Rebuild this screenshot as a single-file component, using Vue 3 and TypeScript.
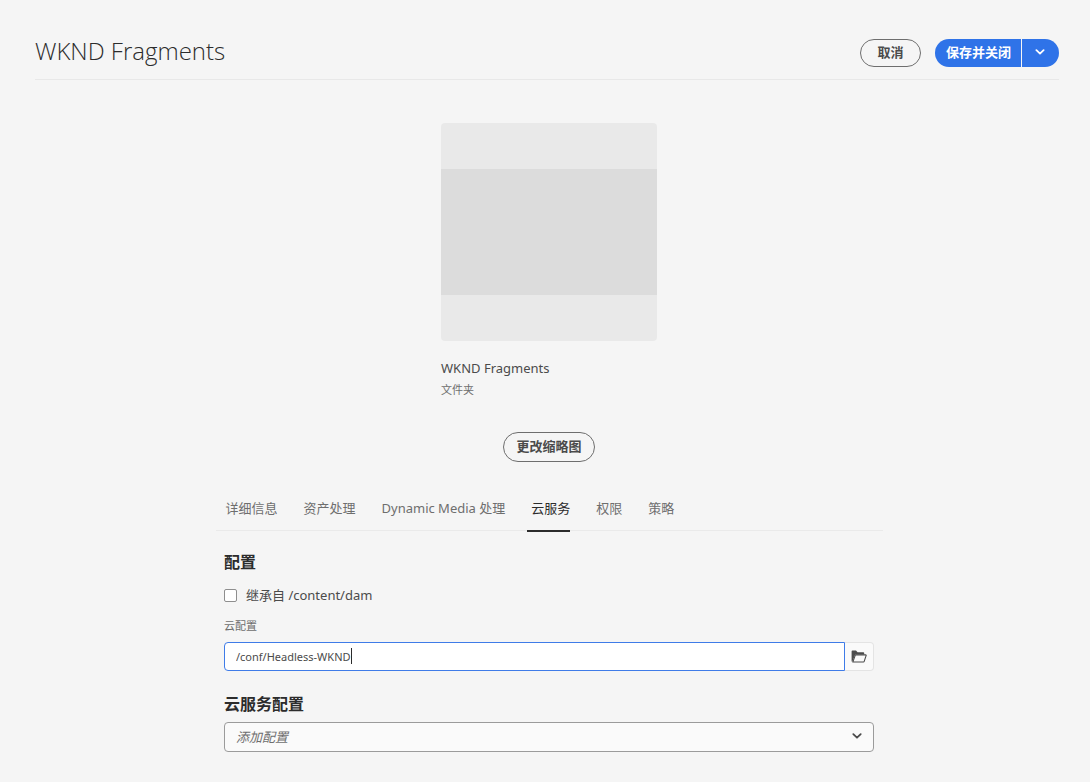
<script setup lang="ts">
import { onMounted, ref } from 'vue'

const tabs: string[] = ['详细信息', '资产处理', 'Dynamic Media 处理', '云服务', '权限', '策略']
const activeTab = ref<string>('云服务')
const inherit = ref<boolean>(false)
const cloudConfig = ref<string>('/conf/Headless-WKND')
const serviceConfig = ref<string>('')
const cloudInput = ref<HTMLInputElement | null>(null)

onMounted(() => {
  const el = cloudInput.value
  if (el) {
    el.focus()
    el.setSelectionRange(el.value.length, el.value.length)
  }
})
</script>

<template>
  <div class="page">
    <header class="header">
      <h1 class="title">WKND Fragments</h1>
      <div class="actions">
        <button type="button" class="pill cancel">取消</button>
        <div class="split">
          <button type="button" class="save">保存并关闭</button>
          <button type="button" class="more" aria-label="更多操作">
            <svg width="10" height="6" viewBox="0 0 10 6" aria-hidden="true">
              <path d="M1.4 1.2 L5 4.6 L8.6 1.2" fill="none" stroke="currentColor" stroke-width="1.8" stroke-linecap="round" stroke-linejoin="round" />
            </svg>
          </button>
        </div>
      </div>
    </header>

    <main class="main">
      <section class="card">
        <div class="thumb"><div class="thumb-band"></div></div>
        <p class="card-title">WKND Fragments</p>
        <p class="card-type">文件夹</p>
      </section>
      <button type="button" class="pill change">更改缩略图</button>

      <nav class="tabs" role="tablist">
        <button
          v-for="tab in tabs"
          :key="tab"
          type="button"
          role="tab"
          class="tab"
          :class="{ active: tab === activeTab }"
          :aria-selected="tab === activeTab"
          @click="activeTab = tab"
        >{{ tab }}</button>
      </nav>

      <form class="form" @submit.prevent>
        <h2 class="heading">配置</h2>
        <label class="check">
          <input v-model="inherit" type="checkbox" />
          <span>继承自 /content/dam</span>
        </label>
        <label class="label" for="cloud-config">云配置</label>
        <div class="path-field">
          <input id="cloud-config" ref="cloudInput" v-model="cloudConfig" class="path-input" type="text" />
          <span class="caret" aria-hidden="true"></span>
          <button type="button" class="browse" aria-label="浏览">
            <svg width="16" height="13" viewBox="0 0 16 13" aria-hidden="true">
              <path d="M0.6 11.6 V1.4 Q0.6 0.6 1.4 0.6 H5 L6.6 2.2 H12.4 Q13.2 2.2 13.2 3 V4.4 H4.2 L1.4 11.6 Z" fill="#4b4b4b" />
              <path d="M4.4 4.9 H14.6 Q15.4 4.9 15.1 5.7 L13.2 11.4 Q13 12 12.4 12 H1.8 Z" fill="#fafafa" stroke="#4b4b4b" stroke-width="1.1" stroke-linejoin="round" />
            </svg>
          </button>
        </div>
        <h2 class="heading services"><label for="service-config">云服务配置</label></h2>
        <div class="select-wrap">
          <select id="service-config" v-model="serviceConfig" class="select">
            <option value="">添加配置</option>
          </select>
          <svg class="chevron" width="10" height="6" viewBox="0 0 10 6" aria-hidden="true">
            <path d="M1.3 1.1 L5 4.7 L8.7 1.1" fill="none" stroke="#4b4b4b" stroke-width="1.8" stroke-linecap="round" stroke-linejoin="round" />
          </svg>
        </div>
      </form>
    </main>
  </div>
</template>

<style>
body {
  margin: 0;
  background: #f5f5f5;
}
</style>

<style scoped>
.page {
  box-sizing: border-box;
  min-height: 100vh;
  padding-bottom: 30px;
  background: #f5f5f5;
  color: #4b4b4b;
  font-family: "Noto Sans", "Noto Sans CJK SC", sans-serif;
  font-size: 13px;
  line-height: 20px;
}
button, input, select {
  font: inherit;
  color: inherit;
  margin: 0;
}
button {
  cursor: pointer;
  padding: 0;
}
h1, h2, p {
  margin: 0;
}
.header {
  display: flex;
  justify-content: space-between;
  align-items: flex-start;
  box-sizing: border-box;
  height: 80px;
  margin: 0 31px 0 35px;
  padding-top: 35px;
  border-bottom: 1px solid #e8e8e8;
}
.title {
  font-family: "Open Sans", "Noto Sans", sans-serif;
  font-size: 24px;
  font-weight: 300;
  line-height: 32px;
  color: #2c2c2c;
}
.actions {
  display: flex;
  gap: 14px;
  padding-top: 4px;
}
.pill {
  box-sizing: border-box;
  border: 1px solid #6e6e6e;
  border-radius: 15px;
  background: transparent;
  font-weight: 700;
}
.cancel {
  width: 61px;
  height: 28px;
  padding-bottom: 2px;
}
.split {
  display: flex;
  gap: 1px;
  height: 28px;
  color: #fff;
}
.save, .more {
  border: 0;
  background: #2f73e8;
}
.save {
  padding: 0 10px 2px 11px;
  border-radius: 14px 0 0 14px;
  font-weight: 700;
}
.more {
  display: flex;
  align-items: center;
  justify-content: center;
  width: 37px;
  padding: 0 2px 2px 0;
  border-radius: 0 14px 14px 0;
}
.main {
  display: flex;
  flex-direction: column;
  align-items: center;
  padding: 43px 0 0 8px;
}
.card {
  width: 216px;
}
.thumb {
  display: flex;
  align-items: center;
  height: 218px;
  border-radius: 4px;
  background: #e9e9e9;
}
.thumb-band {
  width: 100%;
  height: 126px;
  background: #dcdcdc;
}
.card-title {
  margin-top: 17px;
}
.card-type {
  margin-top: 2px;
  font-size: 11px;
  color: #6e6e6e;
}
.change {
  width: 92px;
  height: 30px;
  margin-top: 32px;
  padding-bottom: 2px;
}
.tabs {
  display: flex;
  gap: 22px;
  box-sizing: border-box;
  width: 667px;
  max-width: 100%;
  height: 46px;
  margin-top: 23px;
  padding-left: 6px;
  border-bottom: 1px solid #eaeaea;
}
.tab {
  box-sizing: border-box;
  height: 47px;
  padding: 0 0 0 4px;
  border: 0;
  border-bottom: 2px solid transparent;
  background: transparent;
  color: #6e6e6e;
}
.tab.active {
  border-bottom-color: #2c2c2c;
  color: #2c2c2c;
}
.form {
  display: flex;
  flex-direction: column;
  width: 650px;
  max-width: 100%;
}
.heading {
  margin-top: 19px;
  font-size: 16px;
  font-weight: 700;
  line-height: 24px;
  color: #2c2c2c;
}
.check {
  display: flex;
  align-items: center;
  gap: 9px;
  margin-top: 11px;
}
.check input {
  appearance: none;
  box-sizing: border-box;
  width: 13px;
  height: 13px;
  border: 1px solid #8e8e8e;
  border-radius: 2px;
  background: #fff;
}
.check input:checked {
  background: #4b4b4b;
}
.label {
  margin-top: 11px;
  font-size: 11px;
  color: #6e6e6e;
}
.path-field {
  position: relative;
  display: flex;
  height: 29px;
  margin-top: 6px;
}
.path-input {
  box-sizing: border-box;
  flex: 1;
  min-width: 0;
  padding: 0 11px;
  border: 1px solid #3f7ce8;
  border-radius: 4px 0 0 4px;
  outline: none;
  background: #fff;
  font-size: 11px;
  caret-color: transparent;
}
.caret {
  position: absolute;
  top: 6px;
  left: 127px;
  width: 1px;
  height: 16px;
  background: #2c2c2c;
}
.browse {
  display: flex;
  align-items: center;
  justify-content: center;
  box-sizing: border-box;
  width: 29px;
  border: 1px solid #e4e4e4;
  border-left: 0;
  border-radius: 0 4px 4px 0;
  background: #fafafa;
}
.services {
  margin-top: 21px;
}
.select-wrap {
  position: relative;
  display: flex;
  height: 30px;
  margin-top: 6px;
}
.select {
  appearance: none;
  box-sizing: border-box;
  width: 100%;
  padding: 0 30px 0 11px;
  border: 1px solid #9b9b9b;
  border-radius: 4px;
  background: #fafafa;
  color: #6e6e6e;
  font-style: italic;
}
.chevron {
  position: absolute;
  top: 11px;
  right: 12px;
  pointer-events: none;
}
</style>
